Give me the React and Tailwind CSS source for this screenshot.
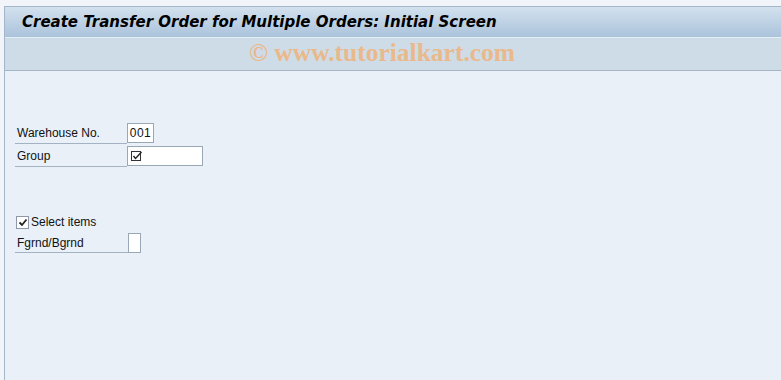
import React from 'react';

const Row = ({ label, children, underline = 'w-[112px]' }) => (
    <div className="flex items-start h-[23px]">
        <div className={`${underline} h-[21px] border-b border-[#a3b3c4] pl-[2px] flex items-center`}>
            {label}
        </div>
        <div>{children}</div>
    </div>
);

const CheckIcon = () => (
    <svg width="12" height="11" viewBox="0 0 12 11">
        <rect x="0.5" y="0.5" width="9" height="9" fill="white" stroke="#333" strokeWidth="1" />
        <path d="M2.5 5 L4.5 7.5 L10.5 1" fill="none" stroke="#222" strokeWidth="1.4" />
    </svg>
);

const App = () => {
    return (
        <div className="w-[781px] h-[380px] bg-[#f1f5f9] pl-[4px] pt-[6px] overflow-hidden" style={{ fontFamily: '"Liberation Sans", Arial, sans-serif' }}>
            <div className="h-full bg-[#e9f0f8] border-l border-t border-[#a6b6c9] flex flex-col">
                <div className="h-[30px] shrink-0 bg-gradient-to-b from-[#d3e1ee] to-[#abc3db] flex items-center pl-[17px]">
                    <h1 className="text-[15px] font-bold italic text-black" style={{ fontFamily: '"DejaVu Sans", Verdana, sans-serif' }}>
                        Create Transfer Order for Multiple Orders: Initial Screen
                    </h1>
                </div>
                <div className="h-[1px] bg-[#e4ecf4]" />
                <div className="h-[33px] shrink-0 bg-[#cedce8] border-b border-[#a5b5c8] flex items-center justify-center pr-[22px] pb-[3px]">
                    <span className="text-[25.5px] font-bold text-[#eab98b] leading-none" style={{ fontFamily: '"Liberation Serif", serif' }}>
                        © www.tutorialkart.com
                    </span>
                </div>

                <div className="pl-[10px] pt-[52px] text-[12px] text-[#111]">
                    <Row label="Warehouse No.">
                        <div className="w-[27px] h-[20px] bg-white border border-[#9aa7b5] flex items-center justify-center text-[12px] tracking-[0.5px]">
                            001
                        </div>
                    </Row>
                    <Row label="Group">
                        <div className="w-[76px] h-[20px] bg-white border border-[#9aa7b5] flex items-center pl-[3px]">
                            <CheckIcon />
                        </div>
                    </Row>

                    <div className="h-[44px]" />

                    <label className="flex items-center gap-[2px] h-[18px] pl-[1px]">
                        <span className="w-[13px] h-[13px] bg-white border border-[#8d99a6] flex items-center justify-center">
                            <svg width="10" height="9" viewBox="0 0 10 9">
                                <path d="M1.5 4.5 L4 7 L8.5 1.5" fill="none" stroke="#222" strokeWidth="1.8" />
                            </svg>
                        </span>
                        <span>Select items</span>
                    </label>
                    <div className="h-[2px]" />
                    <div className="flex items-start">
                        <div className="w-[113px] h-[20px] border-b border-[#a3b3c4] pl-[2px] flex items-center">
                            Fgrnd/Bgrnd
                        </div>
                        <div className="w-[13px] h-[20px] bg-white border border-[#9aa7b5]" />
                    </div>
                </div>
            </div>
        </div>
    );
};

export default App;
